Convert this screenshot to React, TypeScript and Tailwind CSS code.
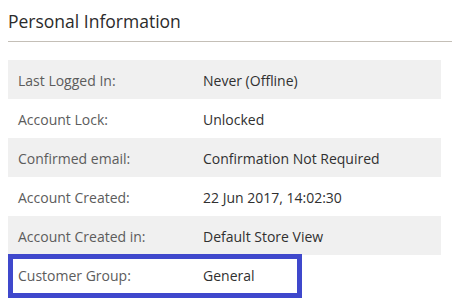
const rows = [
  { label: 'Last Logged In:', value: 'Never (Offline)' },
  { label: 'Account Lock:', value: 'Unlocked' },
  { label: 'Confirmed email:', value: 'Confirmation Not Required' },
  { label: 'Account Created:', value: '22 Jun 2017, 14:02:30' },
  { label: 'Account Created in:', value: 'Default Store View' },
  { label: 'Customer Group:', value: 'General' },
]

export default function App() {
  return (
    <div className="w-[452px] h-[308px] bg-white pl-2 font-['Open_Sans',sans-serif] overflow-hidden">
      {/* Section title */}
      <div className="pt-[10px] pb-[9px] border-b border-[#c4bfb7]">
        <h2 className="text-[17.5px] leading-[22px] text-[#2b2b2b]">Personal Information</h2>
      </div>

      <div className="mt-[18px] w-[433px] text-[14px]">
        {rows.map((row, i) => (
          <div
            key={row.label}
            className={`relative flex h-[39px] items-center ${i % 2 === 0 ? 'bg-[#f0f0f0]' : 'bg-white'}`}
          >
            <div className="w-[195px] pl-[10px] pt-[2px] text-[#5c5c5c]">{row.label}</div>
            <div className="pt-[2px] text-[#303030]">{row.value}</div>
            {row.label === 'Customer Group:' && (
              <div className="absolute left-0 top-[-1px] w-[294px] h-[44px] border-[5px] border-[#3f48cc]" />
            )}
          </div>
        ))}
      </div>
    </div>
  )
}
